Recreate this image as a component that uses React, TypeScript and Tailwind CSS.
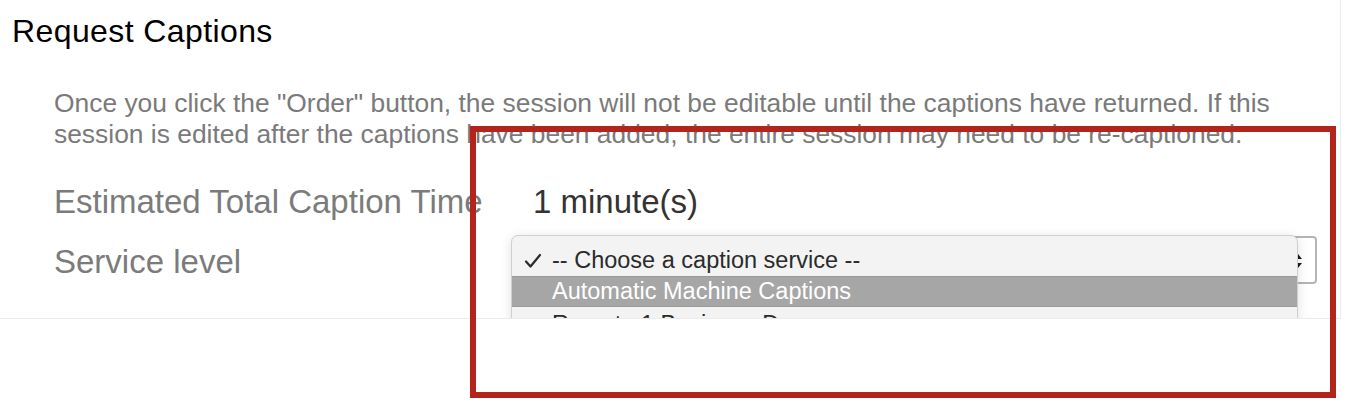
const ff = { fontFamily: '"Liberation Sans", Arial, sans-serif' };

const options = [
  { label: "-- Choose a caption service --", checked: true },
  { label: "Automatic Machine Captions", active: true },
  { label: "Remote 1 Business Day" },
];

function CaptionDropdown() {
  return (
    <div className="absolute left-[511px] top-[235px] w-[787px] rounded-t-[7px] border border-[#cfcfcf] bg-[#f3f3f3] shadow-[0_2px_12px_rgba(0,0,0,0.12)]">
      <div className="pt-[10px]">
        {options.map((opt, i) => (
          <div
            key={opt.label}
            className={
              opt.active
                ? "flex h-[31px] items-center bg-[#a6a6a6] text-white border-y border-[#9a9a9a]"
                : i === 2
                  ? "flex h-[30px] items-center pt-[6px] text-[#2b2b2b]"
                  : "flex h-[30px] items-center text-[#2b2b2b]"
            }
          >
            <span className="flex w-[40px] justify-center pl-[1px]">
              {opt.checked && (
                <svg width="18" height="16" viewBox="0 0 18 16">
                  <path d="M2 8.5 L6.5 13.5 L16 2" fill="none" stroke="#2b2b2b" strokeWidth="2.2" strokeLinecap="round" strokeLinejoin="round" />
                </svg>
              )}
            </span>
            <span className="text-[23.5px]">{opt.label}</span>
          </div>
        ))}
      </div>
    </div>
  );
}

export default function App() {
  return (
    <div className="relative w-[1348px] h-[416px] overflow-hidden bg-white" style={ff}>
      <div className="relative w-[1341px] h-[319px] overflow-hidden border-r border-b border-[#ececec]">
        <h1 className="pl-[12px] pt-[12px] text-[32px] leading-[38px] tracking-[0.4px] text-black">
          Request Captions
        </h1>

        <p className="mt-[38px] pl-[54px] pr-[20px] text-[26.4px] leading-[31px] whitespace-nowrap text-[#7a7a7a]">
          Once you click the "Order" button, the session will not be editable until the captions have returned. If this
          <br />
          session is edited after the captions have been added, the entire session may need to be re-captioned.
        </p>

        <div className="mt-[32px] grid grid-cols-[479px_1fr] gap-y-[20px] pl-[54px] text-[33px] leading-[40px]">
          <div className="text-[#7b7b7b]">Estimated Total Caption Time</div>
          <div className="text-[#333333]">1 minute(s)</div>
          <div className="text-[#7b7b7b]">Service level</div>
          <div />
        </div>

        {/* native select behind the open menu */}
        <div className="absolute left-[1100px] top-[236px] w-[217px] h-[48px] rounded-[4px] border-2 border-[#b5b5b5] bg-white">
          <svg className="absolute right-[12px] top-[14px]" width="10" height="18" viewBox="0 0 10 18">
            <path d="M1 7 L5 2 L9 7 Z" fill="#1a1a1a" />
            <path d="M1 11 L5 16 L9 11 Z" fill="#1a1a1a" />
          </svg>
        </div>

        <CaptionDropdown />
      </div>

      {/* annotation */}
      <div className="absolute left-[470px] top-[126px] w-[866px] h-[272px] border-[6px] border-[#b3241c]" />
    </div>
  );
}
